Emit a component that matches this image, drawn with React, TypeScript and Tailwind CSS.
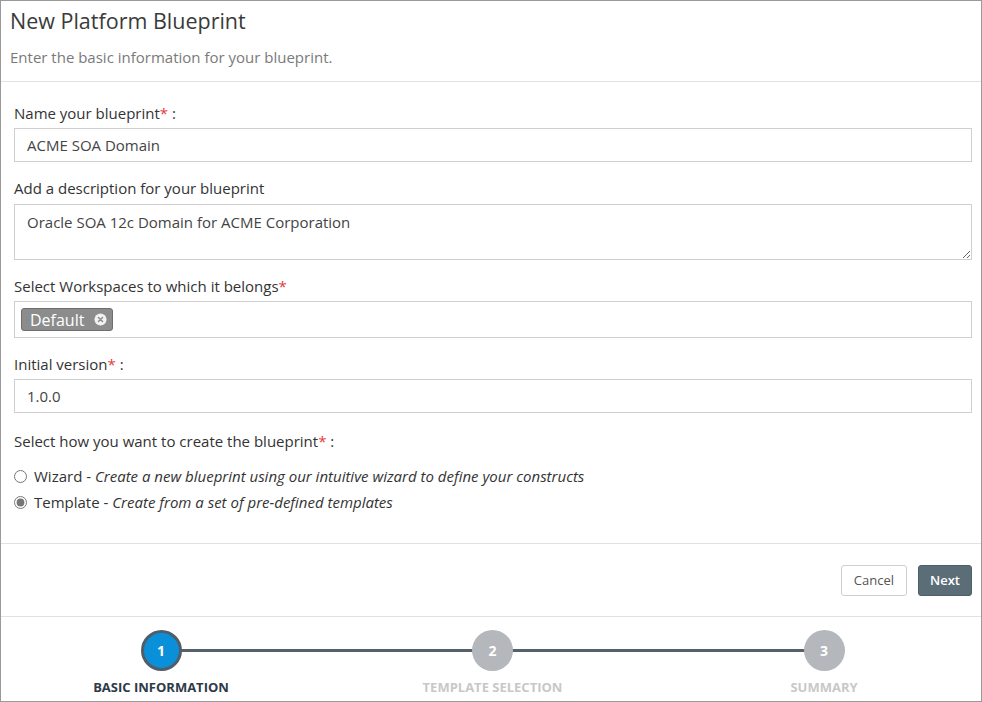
import { useState } from "react";

const Required = () => <span className="text-[#e4393c]">*</span>;

const steps = [
  { n: 1, label: "BASIC INFORMATION", active: true },
  { n: 2, label: "TEMPLATE SELECTION", active: false },
  { n: 3, label: "SUMMARY", active: false },
];

export default function App() {
  const [mode, setMode] = useState("template");
  const [name, setName] = useState("ACME SOA Domain");
  const [desc, setDesc] = useState("Oracle SOA 12c Domain for ACME Corporation");
  const [version, setVersion] = useState("1.0.0");

  return (
    <div
      className="w-[982px] h-[702px] bg-white border border-[#9a9a9a] text-[#333] flex flex-col overflow-hidden"
      style={{ fontFamily: '"Open Sans", sans-serif' }}
    >
      {/* header */}
      <div className="px-[9px] pt-[8px] pb-[14px] border-b border-[#e2e2e2]">
        <h1 className="text-[21.5px] leading-[24px] font-normal text-[#3a3a3a]">New Platform Blueprint</h1>
        <p className="mt-[14px] text-[15px] leading-[20px] text-[#7a7a7a]">
          Enter the basic information for your blueprint.
        </p>
      </div>

      {/* form */}
      <div className="pl-[13px] pr-[9px] pt-[21px] pb-[31px] border-b border-[#e2e2e2] text-[15px]">
        <label className="block leading-[20px]">
          Name your blueprint<Required /> :
        </label>
        <input
          value={name}
          onChange={(e) => setName(e.target.value)}
          className="mt-[5px] w-full h-[34px] border border-[#cfcfcf] px-[12px] text-[15px] text-[#444] outline-none"
        />

        <label className="block mt-[16px] leading-[20px]">Add a description for your blueprint</label>
        <textarea
          value={desc}
          onChange={(e) => setDesc(e.target.value)}
          className="mt-[6px] block w-full h-[56px] border border-[#cfcfcf] px-[12px] py-[6px] text-[15px] text-[#444] outline-none"
        />

        <label className="block mt-[16px] leading-[20px]">
          Select Workspaces to which it belongs<Required />
        </label>
        <div className="mt-[5px] w-full h-[37px] border border-[#cfcfcf] flex items-center px-[6px]">
          <span className="h-[23px] flex items-center gap-[10px] rounded-[3px] bg-[#8c8c8c] border border-[#6e6e6e] pl-[8px] pr-[5px] text-white text-[16px]">
            Default
            <svg width="13" height="13" viewBox="0 0 14 14">
              <circle cx="7" cy="7" r="6.5" fill="#f2f2f2" />
              <path d="M4.8 4.8l4.4 4.4M9.2 4.8l-4.4 4.4" stroke="#8c8c8c" strokeWidth="1.6" strokeLinecap="round" />
            </svg>
          </span>
        </div>

        <label className="block mt-[16px] leading-[20px]">
          Initial version<Required /> :
        </label>
        <input
          value={version}
          onChange={(e) => setVersion(e.target.value)}
          className="mt-[5px] w-full h-[34px] border border-[#cfcfcf] px-[12px] text-[15px] text-[#444] outline-none"
        />

        <label className="block mt-[18px] leading-[20px]">
          Select how you want to create the blueprint<Required /> :
        </label>
        <div className="mt-[15px] flex flex-col gap-[6px]">
          <label className="flex items-center gap-[7px] leading-[20px]">
            <input
              type="radio"
              name="mode"
              checked={mode === "wizard"}
              onChange={() => setMode("wizard")}
              className="w-[13px] h-[13px] accent-[#777] m-0"
            />
            <span>
              Wizard - <i>Create a new blueprint using our intuitive wizard to define your constructs</i>
            </span>
          </label>
          <label className="flex items-center gap-[7px] leading-[20px]">
            <input
              type="radio"
              name="mode"
              checked={mode === "template"}
              onChange={() => setMode("template")}
              className="w-[13px] h-[13px] accent-[#777] m-0"
            />
            <span>
              Template - <i>Create from a set of pre-defined templates</i>
            </span>
          </label>
        </div>
      </div>

      {/* actions */}
      <div className="flex justify-end gap-[11px] pl-[9px] pr-[9px] pt-[21px] pb-[20px] border-b border-[#e2e2e2]">
        <button className="h-[31px] px-[12px] border border-[#cfcfcf] rounded-[3px] bg-white text-[13px] text-[#555]">
          Cancel
        </button>
        <button className="h-[31px] px-[11px] rounded-[3px] bg-[#5b6e78] border border-[#4d5f68] text-[13px] font-semibold text-white">
          Next
        </button>
      </div>

      {/* steps */}
      <div className="relative flex justify-between pl-[60px] pr-[57px] pt-[13px]">
        <div className="absolute left-[160px] right-[156px] top-[32px] h-[3px] bg-[#56606b]" />
        {steps.map((s) => (
          <div key={s.n} className="relative w-[200px] flex flex-col items-center">
            <div
              className={
                s.active
                  ? "w-[41px] h-[41px] rounded-full bg-[#0a90d9] border-[3px] border-[#505d6a] flex items-center justify-center text-white text-[14px] font-bold"
                  : "w-[41px] h-[41px] rounded-full bg-[#b4b7bb] flex items-center justify-center text-white text-[14px] font-bold"
              }
            >
              {s.n}
            </div>
            <div
              className={
                s.active
                  ? "mt-[7px] text-[13px] font-bold text-[#2e3a48]"
                  : "mt-[7px] text-[13px] font-bold text-[#c8c8c8]"
              }
            >
              {s.label}
            </div>
          </div>
        ))}
      </div>
    </div>
  );
}
